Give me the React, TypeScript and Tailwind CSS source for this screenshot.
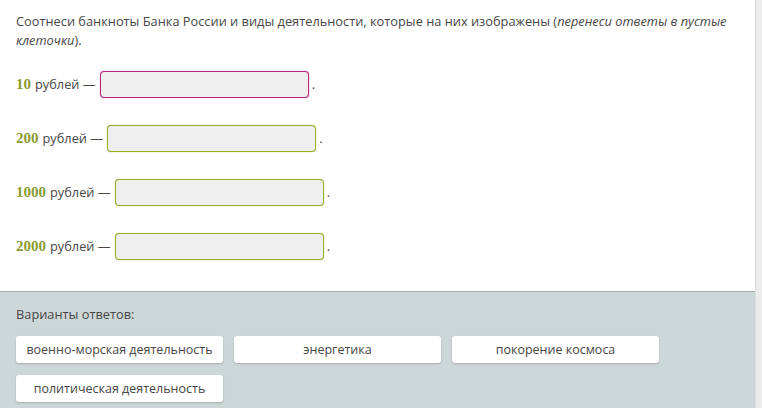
export default function App() {
  const rows = [
    { n: '10', box: 'border-[#b8267f] shadow-[0_0_1px_#b8267f]' },
    { n: '200', box: 'border-[#97b02a] shadow-[0_0_1px_#97b02a]' },
    { n: '1000', box: 'border-[#97b02a] shadow-[0_0_1px_#97b02a]' },
    { n: '2000', box: 'border-[#97b02a] shadow-[0_0_1px_#97b02a]' },
  ]
  const options = [
    'военно-морская деятельность',
    'энергетика',
    'покорение космоса',
    'политическая деятельность',
  ]

  return (
    <div className="flex w-[762px] h-[408px] overflow-hidden bg-white text-[12.8px] leading-[19px] text-[#474747]" style={{ fontFamily: '"Open Sans", "Noto Sans", sans-serif' }}>
      <div className="flex flex-col w-[755px]">
        <div className="px-4 pt-[12px] pb-[31px]">
          <p>
            Соотнеси банкноты Банка России и виды деятельности, которые на них изображены (
            <i>перенеси ответы в пустые клеточки</i>).
          </p>
          <div className="mt-[21px] flex flex-col gap-[27px]">
            {rows.map((r) => (
              <div key={r.n} className="flex items-center h-[27px]">
                <span
                  className="font-bold text-[15px] text-[#8a9b2f] mr-[4px]"
                  style={{ fontFamily: '"Liberation Serif", serif' }}
                >
                  {r.n}
                </span>
                <span>рублей —</span>
                <div className={`ml-[4px] w-[209px] h-[27px] rounded-[4px] bg-[#efefef] border ${r.box}`} />
                <span className="ml-[3px]">.</span>
              </div>
            ))}
          </div>
        </div>
        <div className="flex-1 border-t border-[#aab4b4] bg-[#cdd7d7] px-4 pt-[13px]">
          <div className="mb-[12px]">Варианты ответов:</div>
          <div className="flex flex-wrap gap-x-[11px] gap-y-[12px] text-[12.5px]">
            {options.map((o) => (
              <div
                key={o}
                className="w-[207px] h-[27px] flex items-center justify-center rounded-[3px] bg-white shadow-[0_1px_2px_rgba(0,0,0,0.2)]"
              >
                {o}
              </div>
            ))}
          </div>
        </div>
      </div>
      <div className="w-[7px] bg-[#ececec] border-l border-[#dcdcdc]" />
    </div>
  )
}
